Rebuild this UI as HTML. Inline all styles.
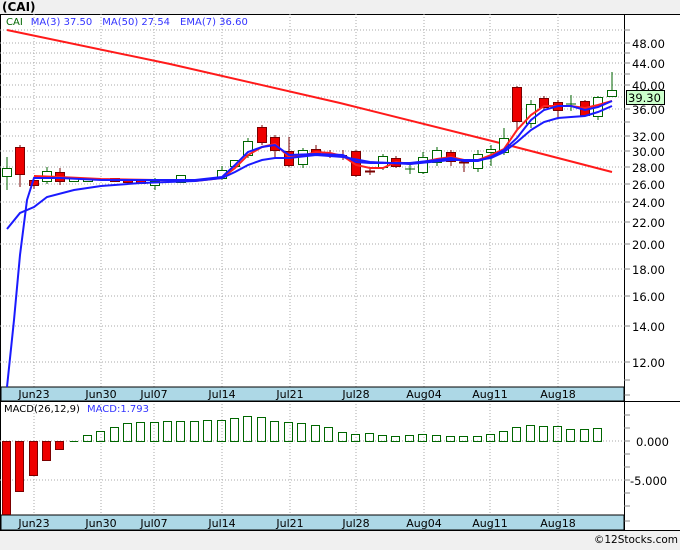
<!DOCTYPE html>
<html><head><meta charset="utf-8"><style>
html,body{margin:0;padding:0;background:#f0f0f0;}
body{width:680px;height:546px;overflow:hidden;font-family:"DejaVu Sans",sans-serif;}
</style></head><body>
<svg width="680" height="546" xmlns="http://www.w3.org/2000/svg" font-family="DejaVu Sans, Liberation Sans, sans-serif">
<rect x="0" y="0" width="680" height="546" fill="#f0f0f0"/>
<text x="2" y="11" font-size="12" font-weight="bold" fill="#000">(CAI)</text>
<rect x="0" y="14" width="680" height="517" fill="#fff"/>
<line x1="0" y1="14.5" x2="680" y2="14.5" stroke="#000"/>
<line x1="0" y1="530.5" x2="680" y2="530.5" stroke="#000"/>
<line x1="624.5" y1="14" x2="624.5" y2="531" stroke="#000"/>
<line x1="0.5" y1="14" x2="0.5" y2="531" stroke="#000"/>
<g stroke="#aaa" stroke-dasharray="1,2">
<line x1="0" y1="30" x2="624" y2="30"/><line x1="0" y1="43" x2="624" y2="43"/><line x1="0" y1="53" x2="624" y2="53"/><line x1="0" y1="63" x2="624" y2="63"/><line x1="0" y1="74" x2="624" y2="74"/><line x1="0" y1="85" x2="624" y2="85"/><line x1="0" y1="97" x2="624" y2="97"/><line x1="0" y1="109" x2="624" y2="109"/><line x1="0" y1="122" x2="624" y2="122"/><line x1="0" y1="136" x2="624" y2="136"/><line x1="0" y1="151" x2="624" y2="151"/><line x1="0" y1="167" x2="624" y2="167"/><line x1="0" y1="184" x2="624" y2="184"/><line x1="0" y1="202" x2="624" y2="202"/><line x1="0" y1="222" x2="624" y2="222"/><line x1="0" y1="244" x2="624" y2="244"/><line x1="0" y1="269" x2="624" y2="269"/><line x1="0" y1="296" x2="624" y2="296"/><line x1="0" y1="326" x2="624" y2="326"/><line x1="0" y1="362" x2="624" y2="362"/>
<line x1="0" y1="441" x2="624" y2="441"/><line x1="0" y1="480" x2="624" y2="480"/>
<line x1="34" y1="14" x2="34" y2="530"/><line x1="101" y1="14" x2="101" y2="530"/><line x1="154" y1="14" x2="154" y2="530"/><line x1="222" y1="14" x2="222" y2="530"/><line x1="290" y1="14" x2="290" y2="530"/><line x1="356" y1="14" x2="356" y2="530"/><line x1="424" y1="14" x2="424" y2="530"/><line x1="490" y1="14" x2="490" y2="530"/><line x1="558" y1="14" x2="558" y2="530"/>
</g>
<g stroke="#888">
<line x1="624" y1="30" x2="630" y2="30"/><line x1="624" y1="43" x2="630" y2="43"/><line x1="624" y1="53" x2="630" y2="53"/><line x1="624" y1="63" x2="630" y2="63"/><line x1="624" y1="74" x2="630" y2="74"/><line x1="624" y1="85" x2="630" y2="85"/><line x1="624" y1="109" x2="630" y2="109"/><line x1="624" y1="122" x2="630" y2="122"/><line x1="624" y1="136" x2="630" y2="136"/><line x1="624" y1="151" x2="630" y2="151"/><line x1="624" y1="167" x2="630" y2="167"/><line x1="624" y1="184" x2="630" y2="184"/><line x1="624" y1="202" x2="630" y2="202"/><line x1="624" y1="222" x2="630" y2="222"/><line x1="624" y1="244" x2="630" y2="244"/><line x1="624" y1="269" x2="630" y2="269"/><line x1="624" y1="296" x2="630" y2="296"/><line x1="624" y1="326" x2="630" y2="326"/><line x1="624" y1="362" x2="630" y2="362"/><line x1="624" y1="380" x2="630" y2="380"/>
<line x1="624" y1="395" x2="630" y2="395"/><line x1="624" y1="415" x2="630" y2="415"/><line x1="624" y1="428" x2="630" y2="428"/><line x1="624" y1="441" x2="630" y2="441"/><line x1="624" y1="454" x2="630" y2="454"/><line x1="624" y1="467" x2="630" y2="467"/><line x1="624" y1="480" x2="630" y2="480"/><line x1="624" y1="493" x2="630" y2="493"/><line x1="624" y1="506" x2="630" y2="506"/><line x1="624" y1="521" x2="630" y2="521"/>
</g>
<g font-size="11.5" fill="#000">
<text x="632" y="48">48.00</text><text x="632" y="68">44.00</text><text x="632" y="90">40.00</text><text x="632" y="114">36.00</text><text x="632" y="141">32.00</text><text x="632" y="156">30.00</text><text x="632" y="172">28.00</text><text x="632" y="189">26.00</text><text x="632" y="207">24.00</text><text x="632" y="227">22.00</text><text x="632" y="249">20.00</text><text x="632" y="274">18.00</text><text x="632" y="301">16.00</text><text x="632" y="331">14.00</text><text x="632" y="367">12.00</text>
<text x="636" y="446">0.000</text><text x="630" y="485">-5.000</text>
</g>
<rect x="626.5" y="90.5" width="38" height="14" fill="#ccffcc" stroke="#000"/>
<text x="628" y="102" font-size="11.5">39.30</text>
<rect x="1" y="387" width="623" height="14" fill="#add8e6" stroke="#000" stroke-width="1"/>
<rect x="1" y="515" width="623" height="15" fill="#add8e6" stroke="#000" stroke-width="1"/>
<line x1="0" y1="401.5" x2="680" y2="401.5" stroke="#000"/>
<g font-size="11" fill="#000" text-anchor="middle">
<text x="34" y="398">Jun23</text><text x="101" y="398">Jun30</text><text x="154" y="398">Jul07</text><text x="222" y="398">Jul14</text><text x="290" y="398">Jul21</text><text x="356" y="398">Jul28</text><text x="424" y="398">Aug04</text><text x="490" y="398">Aug11</text><text x="558" y="398">Aug18</text>
<text x="34" y="527">Jun23</text><text x="101" y="527">Jun30</text><text x="154" y="527">Jul07</text><text x="222" y="527">Jul14</text><text x="290" y="527">Jul21</text><text x="356" y="527">Jul28</text><text x="424" y="527">Aug04</text><text x="490" y="527">Aug11</text><text x="558" y="527">Aug18</text>
</g>
<text x="6" y="25" font-size="10" xml:space="preserve"><tspan fill="#006600">CAI</tspan><tspan fill="#3333ff" dx="8">MA(3) 37.50</tspan><tspan fill="#3333ff" dx="10">MA(50) 27.54</tspan><tspan fill="#3333ff" dx="10">EMA(7) 36.60</tspan></text>
<text x="4" y="412" font-size="10" fill="#000">MACD(26,12,9)</text>
<text x="87" y="412" font-size="10" fill="#3333ff">MACD:1.793</text>
<polyline points="7,30 170,64 340,103 500,143 612,172" fill="none" stroke="#ff1a1a" stroke-width="2"/>
<g stroke-width="1">
<g stroke="#006600" fill="#fff">
<line x1="7" y1="157" x2="7" y2="190"/><rect x="2.5" y="168.5" width="9" height="8"/>
<line x1="47" y1="167" x2="47" y2="184"/><rect x="42.5" y="171.5" width="9" height="10"/>
<rect x="69.5" y="177.5" width="9" height="4"/><rect x="83.5" y="178.5" width="9" height="3"/>
<line x1="155" y1="178" x2="155" y2="190"/><rect x="150.5" y="181.5" width="9" height="4"/>
<rect x="176.5" y="175.5" width="9" height="7"/>
<line x1="222" y1="166" x2="222" y2="180"/><rect x="217.5" y="170.5" width="9" height="8"/>
<rect x="230.5" y="160.5" width="9" height="6"/>
<line x1="248" y1="138" x2="248" y2="158"/><rect x="243.5" y="141.5" width="9" height="14"/>
<line x1="303" y1="148" x2="303" y2="168"/><rect x="298.5" y="150.5" width="9" height="14"/>
<line x1="383" y1="154" x2="383" y2="170"/><rect x="378.5" y="156.5" width="9" height="11"/>
<line x1="410" y1="164" x2="410" y2="174"/><line x1="405" y1="169" x2="415" y2="169"/>
<line x1="423" y1="152" x2="423" y2="174"/><rect x="418.5" y="157.5" width="9" height="15"/>
<line x1="437" y1="147" x2="437" y2="166"/><rect x="432.5" y="150.5" width="9" height="12"/>
<line x1="478" y1="150" x2="478" y2="172"/><rect x="473.5" y="154.5" width="9" height="14"/>
<line x1="491" y1="145" x2="491" y2="166"/><rect x="486.5" y="149.5" width="9" height="3"/>
<line x1="504" y1="128" x2="504" y2="155"/><rect x="499.5" y="138.5" width="9" height="14"/>
<line x1="531" y1="100" x2="531" y2="128"/><rect x="526.5" y="104.5" width="9" height="19"/>
<line x1="571" y1="95" x2="571" y2="111"/><line x1="566" y1="104" x2="576" y2="104"/>
<line x1="598" y1="96" x2="598" y2="120"/><rect x="593.5" y="97.5" width="9" height="19"/>
<line x1="612" y1="72" x2="612" y2="97"/><rect x="607.5" y="90.5" width="9" height="6"/>
</g>
<g stroke="#7a0000" fill="#ee0000">
<line x1="20" y1="145" x2="20" y2="187"/><rect x="15.5" y="147.5" width="9" height="27"/>
<line x1="34" y1="178" x2="34" y2="189"/><rect x="29.5" y="180.5" width="9" height="5"/>
<line x1="60" y1="168" x2="60" y2="185"/><rect x="55.5" y="172.5" width="9" height="9"/>
<rect x="110.5" y="178.5" width="9" height="3"/><rect x="123.5" y="179.5" width="9" height="3"/><rect x="136.5" y="179.5" width="9" height="4"/>
<line x1="262" y1="125" x2="262" y2="145"/><rect x="257.5" y="127.5" width="9" height="15"/>
<line x1="275" y1="135" x2="275" y2="157"/><rect x="270.5" y="137.5" width="9" height="13"/>
<line x1="289" y1="137" x2="289" y2="167"/><rect x="284.5" y="151.5" width="9" height="14"/>
<line x1="316" y1="145" x2="316" y2="155"/><rect x="311.5" y="149.5" width="9" height="4"/>
<line x1="356" y1="150" x2="356" y2="177"/><rect x="351.5" y="151.5" width="9" height="24"/>
<line x1="396" y1="156" x2="396" y2="168"/><rect x="391.5" y="158.5" width="9" height="8"/>
<line x1="451" y1="150" x2="451" y2="166"/><rect x="446.5" y="152.5" width="9" height="9"/>
<line x1="517" y1="86" x2="517" y2="130"/><rect x="512.5" y="87.5" width="9" height="34"/>
<line x1="544" y1="96" x2="544" y2="110"/><rect x="539.5" y="98.5" width="9" height="9"/>
<line x1="558" y1="100" x2="558" y2="118"/><rect x="553.5" y="102.5" width="9" height="8"/>
<line x1="585" y1="100" x2="585" y2="116"/><rect x="580.5" y="101.5" width="9" height="14"/>
</g>
<g stroke="#7a0000" stroke-width="2">
<line x1="330" y1="150" x2="330" y2="158" stroke-width="1"/><line x1="326" y1="154" x2="334" y2="154"/>
<line x1="343" y1="150" x2="343" y2="160" stroke-width="1"/><line x1="339" y1="156" x2="347" y2="156"/>
<line x1="370" y1="168" x2="370" y2="175" stroke-width="1"/><line x1="365" y1="171.5" x2="375" y2="171.5"/>
<line x1="464" y1="160" x2="464" y2="172" stroke-width="1"/><line x1="459" y1="162.5" x2="469" y2="162.5"/>
</g>
</g>
<polyline points="34,176 60,177 101,179 155,180 195,181 222,178 235,168 248,155 262,147 275,144 289,157 302,156 316,152 330,153 343,156 356,165 370,168 383,168 396,162 410,164 423,162 437,159 451,157 464,160 478,160 491,155 504,149 517,130 531,115 544,106 558,106 571,106 585,108 598,105 612,101" fill="none" stroke="#ff2020" stroke-width="2"/>
<polyline points="7,387 14,320 20,255 27,200 34,178 60,178 101,180 155,180 195,180 222,177 235,165 248,152 262,147 275,145 289,155 316,154 343,155 356,162 370,163 410,163 437,160 451,158 464,161 478,161 491,157 504,150 517,138 531,120 544,110 558,106 571,106 585,110 598,107 612,101" fill="none" stroke="#1a1aff" stroke-width="2"/>
<polyline points="7,229 20,213 34,207 47,197 74,190 101,186 141,183 195,181 222,178 235,172 248,165 262,160 275,158 289,158 316,155 343,157 370,162 410,164 451,160 478,160 491,158 504,152 517,142 531,130 544,122 558,118 571,117 585,116 598,112 612,106" fill="none" stroke="#1a1aff" stroke-width="2"/>
<g fill="#ee0000" stroke="#7a0000">
<rect x="2.5" y="441.5" width="8" height="73"/><rect x="15.5" y="441.5" width="8" height="50"/><rect x="29.5" y="441.5" width="8" height="34"/><rect x="42.5" y="441.5" width="8" height="19"/><rect x="55.5" y="441.5" width="8" height="8"/>
</g>
<g fill="none" stroke="#006600">
<line x1="70" y1="441.5" x2="78" y2="441.5"/>
<rect x="83.5" y="435.5" width="8" height="6"/><rect x="96.5" y="431.5" width="8" height="10"/><rect x="110.5" y="427.5" width="8" height="14"/><rect x="123.5" y="423.5" width="8" height="18"/><rect x="136.5" y="422.5" width="8" height="19"/><rect x="150.5" y="422.5" width="8" height="19"/><rect x="163.5" y="421.5" width="8" height="20"/><rect x="176.5" y="421.5" width="8" height="20"/><rect x="190.5" y="421.5" width="8" height="20"/><rect x="203.5" y="420.5" width="8" height="21"/><rect x="217.5" y="420.5" width="8" height="21"/><rect x="230.5" y="418.5" width="8" height="23"/><rect x="243.5" y="416.5" width="8" height="25"/><rect x="257.5" y="417.5" width="8" height="24"/><rect x="270.5" y="421.5" width="8" height="20"/><rect x="284.5" y="422.5" width="8" height="19"/><rect x="297.5" y="423.5" width="8" height="18"/><rect x="311.5" y="425.5" width="8" height="16"/><rect x="324.5" y="427.5" width="8" height="14"/><rect x="338.5" y="432.5" width="8" height="9"/><rect x="351.5" y="434.5" width="8" height="7"/><rect x="365.5" y="433.5" width="8" height="8"/><rect x="378.5" y="435.5" width="8" height="6"/><rect x="391.5" y="436.5" width="8" height="5"/><rect x="405.5" y="435.5" width="8" height="6"/><rect x="418.5" y="434.5" width="8" height="7"/><rect x="432.5" y="435.5" width="8" height="6"/><rect x="446.5" y="436.5" width="8" height="5"/><rect x="459.5" y="436.5" width="8" height="5"/><rect x="473.5" y="436.5" width="8" height="5"/><rect x="486.5" y="434.5" width="8" height="7"/><rect x="499.5" y="431.5" width="8" height="10"/><rect x="512.5" y="427.5" width="8" height="14"/><rect x="526.5" y="425.5" width="8" height="16"/><rect x="539.5" y="426.5" width="8" height="15"/><rect x="553.5" y="426.5" width="8" height="15"/><rect x="566.5" y="429.5" width="8" height="12"/><rect x="580.5" y="429.5" width="8" height="12"/><rect x="593.5" y="428.5" width="8" height="13"/>
</g>
<text x="678" y="543" font-size="10.5" fill="#000" text-anchor="end">©12Stocks.com</text>
</svg>
</body></html>
